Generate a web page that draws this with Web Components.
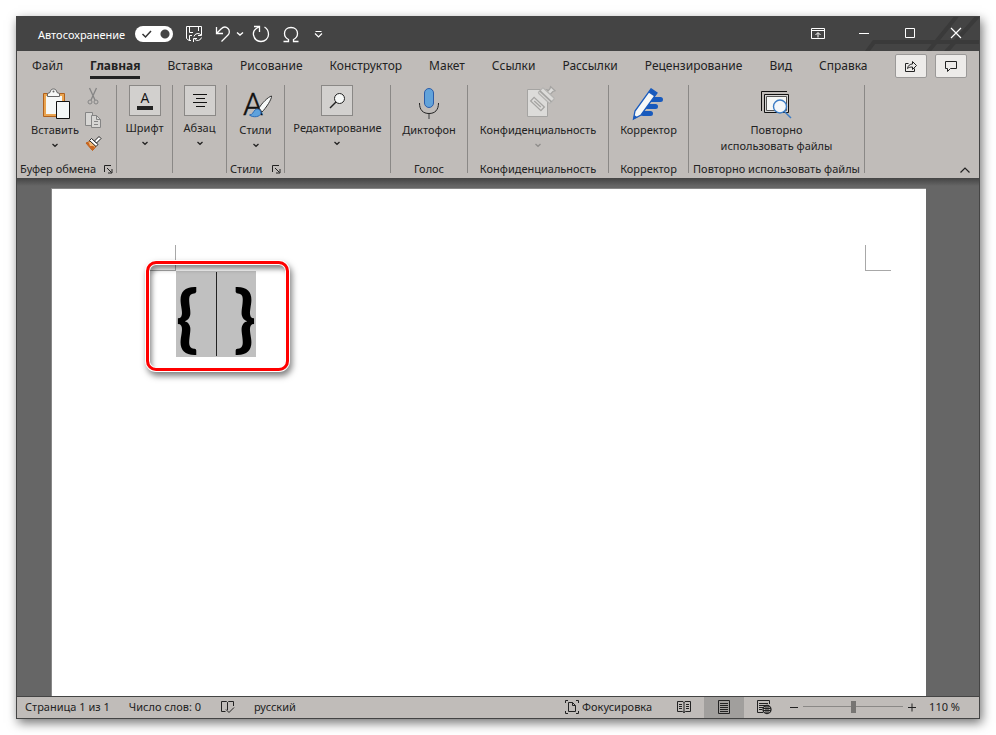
<!DOCTYPE html>
<html lang="ru">
<head>
<meta charset="utf-8">
<title>Документ</title>
<style>
  html, body { height: 100%; margin: 0; }
  body { background: #fff; font-family: "Noto Sans", "Open Sans", sans-serif; font-size: 11px; color: #222; }
</style>
</head>
<body>
<word-window></word-window>

<script>
const ICONS = {
  save: [18, 18, '<g fill="none" stroke="#fff"><path d="M6 15.500H4L1.500 13.500V1.500H16.500V7"/><path d="M4.500 1.500V7.500H8M13.500 1.500V6M4.500 15V10.500H7"/><path d="M9 11.500a4 4 0 0 1 7-1.500M16.500 7v3.500H13M16.500 12.500a4 4 0 0 1-7 1.500M8.500 17v-3.500H12"/></g>'],
  undo: [18, 18, '<path d="M1.500 2V8.500H8M2 8L6 4C8.500 1.500 11 1.500 13 3.500C15 5.500 14.500 8.500 13 10L6.500 16.500" fill="none" stroke="#fff" stroke-width="1.300"/>'],
  redo: [18, 18, '<path d="M2 1.500H7.500V7M7 2C2.500 4 1 7.500 1.500 10C2.500 14.500 6 16.500 9 16.500C13 16.500 16.500 13.500 16.500 9.500C16.500 6 15 3.500 12.500 2" fill="none" stroke="#fff" stroke-width="1.300"/>'],
  omega: [18, 18, '<path d="M1.500 16.500H6.500V14.500C3.500 13 2.500 10.500 2.500 8.500C2.500 5 5 2.500 9 2.500S15.500 5 15.500 8.500C15.500 10.500 14.500 13 11.500 14.500V16.500H16.500" fill="none" stroke="#fff" stroke-width="1.300"/>'],
  caretWhite: [8, 8, '<path d="M1 2.500L4 5L7 2.500" fill="none" stroke="#fff" stroke-width="1.400"/>'],
  more: [10, 10, '<path d="M1.500 2.500H7.500M1 4.500L4.500 8L8 4.500" fill="none" stroke="#fff" stroke-width="1.200"/>'],
  ribbonMode: [14, 12, '<path d="M.5 .5H13.500V10.500H.5ZM.5 2.500H13.500M7 9.500V5M4.500 7L7 4.500L9.500 7" fill="none" stroke="#fff"/>'],
  minimize: [12, 12, '<path d="M1 5.500H11" stroke="#fff"/>'],
  maximize: [12, 12, '<path d="M1.500 .5H10.500V9.500H1.500Z" fill="none" stroke="#fff"/>'],
  close: [12, 12, '<path d="M1 0L11 10M11 0L1 10" stroke="#fff" stroke-width="1.200"/>'],
  share: [14, 14, '<path d="M4.500 4.500H1.500V12.500H10.500V9.500M3.500 9.500C4 6.500 6 5 8.500 5V2.500L12.500 6.500L8.500 10.500V8C6 8 4.500 8.500 3.500 9.500Z" fill="none" stroke="#222"/>'],
  comment: [14, 14, '<path d="M1.500 2.500H12.500V9.500H6.500L3.500 12.500V9.500H1.500Z" fill="none" stroke="#222"/>'],
  caret: [8, 8, '<path d="M1.500 3L4 5.300L6.500 3" fill="none" stroke="currentColor" stroke-width="1.300"/>'],
  collapse: [12, 8, '<path d="M1.500 6.500L6 2L10.500 6.500" fill="none" stroke="#222" stroke-width="1.200"/>'],
  launcher: [9, 9, '<path d="M.5 7V.5H7M3 3L7.500 7.500M8 4V8H4" fill="none" stroke="#222"/>'],
  paste: [28, 32, '<path d="M2.500 5.500H23.500V28.500H2.500Z" fill="#e9a450" stroke="#b0601b"/><path d="M5 8H21V26H5Z" fill="#f6f8f7"/><path d="M6.500 8.500V5.500L9 4.500C9.500 2 10.500 1 12.500 1S15.500 2 16 4.500L18.500 5.500V8.500Z" fill="#f6f8f7" stroke="#666"/><circle cx="12.500" cy="3.500" r="1" fill="#666"/><path d="M15.500 13.500H28.500V30.500H15.500Z" fill="#f4f7f7" stroke="#111"/>'],
  cut: [16, 17, '<g fill="none" stroke="#858585"><path d="M4.500 0L10 12M11.500 0L6 12" stroke-width="1.300"/><circle cx="5" cy="14" r="2"/><circle cx="11" cy="14" r="2"/></g>'],
  copy: [17, 17, '<g fill="#d7d6d4" stroke="#858585"><path d="M.5 .5H7.500V13.500H.5Z"/><path d="M6.500 3.500H11.500L15.500 7.500V15.500H6.500Z"/><path d="M11.500 3.500V7.500H15.500M9 9.500H13M9 12.500H13" fill="none"/></g>'],
  painter: [17, 15, '<path d="M1 7L6 5L11 10.500L7.500 14.500Z" fill="#f3b775" stroke="#bb5a13"/><path d="M1 7L4 7L5 10L8 10L10 11L7.500 14.500Z" fill="#c96620"/><path d="M4.500 4.500L6.500 2.500L13 8.500L11 10.500Z" fill="#fff" stroke="#222"/><path d="M9.500 5L14 .500L16 2.500L11.500 7Z" fill="#fff" stroke="#222"/>'],
  font: [20, 20, '<text x="10" y="12" font-family="Open Sans, sans-serif" font-size="14" text-anchor="middle" fill="#111">A</text><path d="M2 15H18V19H2Z" fill="#222"/>'],
  paragraph: [20, 20, '<path d="M3 3.500H17M6 7.500H15M3 11.500H17M6 15.500H15" stroke="#111"/>'],
  search: [20, 20, '<circle cx="12.500" cy="7.500" r="5" fill="#f6f8f7" stroke="#222"/><path d="M9 11L3 17" stroke="#222" stroke-width="1.400"/>'],
  styles: [34, 32, '<text x="14" y="27" font-family="Roboto, sans-serif" font-size="32" font-weight="300" text-anchor="middle" fill="#111" stroke="#111" stroke-width=".4">A</text><path d="M20 20C23 15 29 9 32.500 8C33 11 27 20 23 24Z" fill="#f6f8f7" stroke="#333"/><path d="M10.500 27C14 26.500 14 24 16 22C18 20 22 21.500 22 25C21.500 29 14 30 10.500 27Z" fill="#5ea2dd" stroke="#2d6cb5"/>'],
  mic: [24, 32, '<rect x="7.500" y=".500" width="9" height="19" rx="4.500" fill="#62a3da" stroke="#2c5da8"/><path d="M2.500 15C2.500 22 6 25.500 12 25.500S21.500 22 21.500 15" fill="none" stroke="#222"/><path d="M12 26V31" stroke="#666" stroke-width="1.500"/>'],
  privacy: [28, 32, '<path d="M3.500 1.500H23.500V28.500H3.500Z" fill="#dcdbd9" stroke="#a5a4a2"/><g stroke="#a5a4a2" stroke-width="1.300" fill="#dcdbd9"><g transform="rotate(43 13.500 16)"><path d="M6.500 13.500H20.500V18.500H6.500Z"/><path d="M9 16H18"/></g><g transform="rotate(43 22 8)"><path d="M20 5V0L19 -2H25L24 0V5Z"/><rect x="14" y="4" width="16" height="7" rx="1" stroke="#b5b4b2"/><path d="M14 8.500H30" stroke-width="1.800"/></g></g>'],
  editor: [32, 32, '<g stroke="#185abd" stroke-width="5" stroke-linecap="round"><path d="M18 11.500H28.500M15 18.500H23.500M11 25.500H18.500"/></g><path d="M19 .800L25 5L9 27L1.500 31L3 23Z" fill="#f6f8f7" stroke="#185abd" stroke-width="1.300"/><path d="M19 .800L25 5L22.500 8.500L16.500 4.500ZM2.300 27L1 31.500L5.500 29.300Z" fill="#185abd"/>'],
  reuse: [32, 30, '<path d="M1.500 22V2.500H27" fill="none" stroke="#111"/><path d="M4.500 5.500H28.500V23.500H4.500Z" fill="#d4d3d2" stroke="#111"/><path d="M6.500 7.500H26.500V21.500H6.500Z" fill="#f6f8f7" stroke="#555"/><path d="M24 22L31 29" stroke="#3c7cc4" stroke-width="1.500"/><circle cx="20" cy="17.500" r="6.500" fill="#f3f7fa" stroke="#3c7cc4" stroke-width="1.400"/>'],
  proof: [15, 14, '<path d="M7.500 2.500V10M7.500 2.500L6.500 1.500H1.500V11.500H5.500M7.500 2.500L8.500 1.500H13.500V6M6 9.500L9 12.500L14 7.500" fill="none" stroke="#222"/>'],
  focus: [14, 14, '<path d="M3 .5H.5V3M11 .5H13.500V3M.5 11V13.500H3M13.500 11V13.500H11M3.500 2.500H7.500L10.500 5.500V11.500H3.500ZM7.500 2.500V5.500H10.500" fill="none" stroke="#222"/>'],
  read: [14, 14, '<path d="M7 2V13M7 2.500L6 1.500H.5V11.500H5.500L7 12.500L8.500 11.500H13.500V1.500H8L7 2.500M2 4.500H5M2 6.500H5M2 8.500H5M9 4.500H12M9 6.500H12M9 8.500H12" fill="none" stroke="#222"/>'],
  print: [12, 14, '<path d="M.5 .5H11.500V13.500H.5ZM2 3.500H10M2 5.500H10M2 7.500H10M2 9.500H10M2 11.500H10" fill="none" stroke="#222"/>'],
  web: [15, 14, '<path d="M6 12.500H.5V.5H12.500V4M2 3.500H11M2 5.500H8M2 7.500H6M2 9.500H5" fill="none" stroke="#222"/><circle cx="10" cy="9.500" r="4" fill="#c0bcb9" stroke="#222" stroke-width="1.300"/><path d="M6 8.500H14M6 10.500H14M9 6V13M11 6V13" stroke="#222"/>'],
  minus: [10, 10, '<path d="M1 5.500H9" stroke="#222"/>'],
  plus: [10, 10, '<path d="M1 5.500H9M5 1.500V9.500" stroke="#222"/>']
};

const RESET = `
  * { box-sizing: border-box; }
  button { font: inherit; color: inherit; background: none; border: 0; margin: 0; padding: 0; display: flex; align-items: center; justify-content: center; }
`;

function define(name, markup, setup) {
  customElements.define(name, class extends HTMLElement {
    connectedCallback() {
      if (this.shadowRoot) return;
      const root = this.attachShadow({ mode: 'open' });
      root.innerHTML = markup;
      if (setup) setup(this, root);
    }
  });
}

define('ui-icon', `<style>:host{display:block;flex:none} svg{display:block;overflow:visible}</style><span></span>`, (el, root) => {
  const [w, h, body] = ICONS[el.getAttribute('name')];
  root.querySelector('span').innerHTML = `<svg width="${w}" height="${h}" viewBox="0 0 ${w} ${h}" aria-hidden="true">${body}</svg>`;
});

define('title-bar', `<style>${RESET}
  :host { display: flex; align-items: center; height: 34px; flex: none; color: #fff; background: #444; position: relative; overflow: hidden; }
  .decor { position: absolute; right: 0; top: 0; }
  label { display: flex; align-items: center; gap: 10px; margin-left: 21px; }
  input { appearance: none; margin: 0; width: 38px; height: 16px; border-radius: 8px; background: radial-gradient(circle at 30px 8px, #444 4px, #fff 5px); }
  .toggle { display: grid; }
  .toggle > * { grid-area: 1 / 1; }
  .toggle svg { align-self: center; margin-left: 6px; pointer-events: none; z-index: 1; }
  .quick { display: flex; align-items: center; margin-left: 12px; flex: 1; }
  .quick button + button { margin-left: 12px; }
  .quick button.drop { margin-left: 3px; }
  .quick button.redo { margin-left: 8px; }
  .quick button.more { margin-left: 14px; }
  .caption { display: flex; align-self: stretch; position: relative; }
  .caption button { width: 46px; }
</style>
<svg class="decor" width="120" height="34" viewBox="0 0 120 34" fill="none" stroke="#3a3a3a" stroke-width="4" aria-hidden="true"><path d="M7 36L15 25H120M68 36L98 -1M86 36L119 -1"/></svg>
<label>Автосохранение<span class="toggle"><input type="checkbox" role="switch" checked><svg width="12" height="10" viewBox="0 0 12 10"><path d="M1.500 5L4.500 8L10 2" fill="none" stroke="#333" stroke-width="1.500"/></svg></span></label>
<div class="quick">
  <button aria-label="Сохранить"><ui-icon name="save"></ui-icon></button>
  <button aria-label="Отменить"><ui-icon name="undo"></ui-icon></button>
  <button class="drop" aria-label="Список отмены"><ui-icon name="caretWhite"></ui-icon></button>
  <button class="redo" aria-label="Повторить"><ui-icon name="redo"></ui-icon></button>
  <button aria-label="Символ"><ui-icon name="omega"></ui-icon></button>
  <button class="more" aria-label="Настройка панели"><ui-icon name="more"></ui-icon></button>
</div>
<div class="caption">
  <button aria-label="Параметры ленты"><ui-icon name="ribbonMode"></ui-icon></button>
  <button aria-label="Свернуть"><ui-icon name="minimize"></ui-icon></button>
  <button aria-label="Развернуть"><ui-icon name="maximize"></ui-icon></button>
  <button aria-label="Закрыть"><ui-icon name="close"></ui-icon></button>
</div>`);

define('ribbon-tab', `<style>${RESET}
  :host { display: block; }
  button { height: 28px; line-height: 20px; padding: 4px 0 0; border-bottom: 3px solid transparent; font-size: 12px; white-space: nowrap; }
  :host([selected]) button { font-weight: 700; border-color: #222; }
</style><button role="tab"><slot></slot></button>`, (el, root) =>
  root.querySelector('button').setAttribute('aria-selected', el.hasAttribute('selected')));

define('tab-strip', `<style>${RESET}
  :host { display: flex; align-items: flex-start; height: 31px; flex: none; padding: 0 12px 0 15px; }
  .tabs { display: flex; gap: 27px; flex: 1; min-width: 0; }
  .actions { display: flex; gap: 8px; padding-top: 3px; }
  .actions button { width: 32px; height: 24px; background: #edebe9; border: 1px solid #9b9998; border-radius: 2px; }
</style>
<div class="tabs" role="tablist"><slot></slot></div>
<div class="actions"><button aria-label="Поделиться"><ui-icon name="share"></ui-icon></button><button aria-label="Примечания"><ui-icon name="comment"></ui-icon></button></div>`);

define('ribbon-button', `<style>${RESET}
  :host { display: block; padding-top: 2px; }
  :host([boxed]) { padding-top: 0; }
  button { flex-direction: column; justify-content: flex-start; line-height: 16px; text-align: center; white-space: nowrap; }
  .icon { height: 34px; display: flex; align-items: center; justify-content: center; margin-bottom: 1px; }
  :host([boxed]) .icon { width: 32px; height: 31px; margin-bottom: 4px; background: #d2d0ce; border: 1px solid #8a8886; }
  .caret { display: none; height: 14px; align-items: center; }
  :host([menu]) .caret { display: flex; }
  :host([disabled]) .caret { color: #8f8d8b; }
</style>
<button><span class="icon"></span><span><slot></slot></span><span class="caret"><ui-icon name="caret"></ui-icon></span></button>`, (el, root) => {
  root.querySelector('.icon').innerHTML = `<ui-icon name="${el.getAttribute('icon')}"></ui-icon>`;
});

define('ribbon-group', `<style>${RESET}
  :host { display: flex; flex: none; min-width: var(--group-width, 0); }
  .column { flex: 1; display: flex; flex-direction: column; }
  .body { flex: 1; display: flex; justify-content: center; gap: 6px; }
  .separator { width: 1px; margin-bottom: 5px; background: #8a8886; }
  footer { display: flex; justify-content: center; align-items: center; height: 17px; padding-bottom: 1px; line-height: 16px; white-space: nowrap; }
  footer button { display: none; margin-left: auto; }
  :host([launcher]) footer { padding: 0 3px 1px; }
  :host([launcher]) footer button { display: flex; }
</style>
<div class="column"><div class="body"><slot></slot></div><footer><span></span><button aria-label="Параметры группы"><ui-icon name="launcher"></ui-icon></button></footer></div><div class="separator"></div>`, (el, root) => {
  root.querySelector('footer span').textContent = el.getAttribute('label') || '';
});

define('clipboard-tools', `<style>${RESET} :host { display: grid; gap: 7px; align-content: start; padding-top: 3px; }</style>
<button aria-label="Вырезать"><ui-icon name="cut"></ui-icon></button>
<button aria-label="Копировать"><ui-icon name="copy"></ui-icon></button>
<button aria-label="Формат по образцу"><ui-icon name="painter"></ui-icon></button>`);

define('ribbon-bar', `<style>${RESET}
  :host { display: block; flex: none; background: #c0bcb9; }
  .groups { display: flex; height: 96px; padding-top: 3px; }
  .end { margin-left: auto; align-self: flex-end; padding: 0 8px 4px; }
</style>
<tab-strip>
  <ribbon-tab>Файл</ribbon-tab><ribbon-tab selected>Главная</ribbon-tab><ribbon-tab>Вставка</ribbon-tab><ribbon-tab>Рисование</ribbon-tab><ribbon-tab>Конструктор</ribbon-tab><ribbon-tab>Макет</ribbon-tab><ribbon-tab>Ссылки</ribbon-tab><ribbon-tab>Рассылки</ribbon-tab><ribbon-tab>Рецензирование</ribbon-tab><ribbon-tab>Вид</ribbon-tab><ribbon-tab>Справка</ribbon-tab>
</tab-strip>
<div class="groups">
  <ribbon-group label="Буфер обмена" launcher style="--group-width:100px"><ribbon-button icon="paste" menu>Вставить</ribbon-button><clipboard-tools></clipboard-tools></ribbon-group>
  <ribbon-group style="--group-width:56px"><ribbon-button icon="font" boxed menu>Шрифт</ribbon-button></ribbon-group>
  <ribbon-group style="--group-width:54px"><ribbon-button icon="paragraph" boxed menu>Абзац</ribbon-button></ribbon-group>
  <ribbon-group label="Стили" launcher style="--group-width:58px"><ribbon-button icon="styles" menu>Стили</ribbon-button></ribbon-group>
  <ribbon-group style="--group-width:106px"><ribbon-button icon="search" boxed menu>Редактирование</ribbon-button></ribbon-group>
  <ribbon-group label="Голос" style="--group-width:77px"><ribbon-button icon="mic">Диктофон</ribbon-button></ribbon-group>
  <ribbon-group label="Конфиденциальность" style="--group-width:141px"><ribbon-button icon="privacy" menu disabled>Конфиденциальность</ribbon-button></ribbon-group>
  <ribbon-group label="Корректор" style="--group-width:80px"><ribbon-button icon="editor">Корректор</ribbon-button></ribbon-group>
  <ribbon-group label="Повторно использовать файлы" style="--group-width:176px"><ribbon-button icon="reuse">Повторно<br>использовать файлы</ribbon-button></ribbon-group>
  <button class="end" aria-label="Свернуть ленту"><ui-icon name="collapse"></ui-icon></button>
</div>`);

define('document-page', `<style>${RESET}
  :host { display: block; flex: 1; min-height: 0; overflow: hidden; padding: 10px 53px 0 34px; background: linear-gradient(#444 0, #666 8px); }
  .page { height: 100%; background: #fff; border: 1px solid #888; border-bottom: 0; border-right: 0; padding: 56px 35px 0 98px; }
  .marks { display: flex; justify-content: space-between; }
  .marks i { width: 26px; height: 26px; border: 0 solid #a8a8a8; border-bottom-width: 1px; }
  .marks i:first-child { border-right-width: 1px; }
  .marks i:last-child { border-left-width: 1px; }
  .line { display: inline-flex; justify-content: space-between; position: relative; width: 80px; margin-left: 26px; height: 86px; background: #c0c0c0; color: #000; font: 900 72px/90px "Lato", sans-serif; white-space: pre; }
  .cursor { position: absolute; left: 40px; top: 1px; bottom: 1px; width: 1px; background: #222; }
  .callout { position: absolute; left: -30px; top: -10px; width: 143px; height: 110px; border: 3px solid #f00; border-radius: 10px;
    box-shadow: 0 0 0 1px #fff, 2px 4px 6px 1px rgba(0,0,0,.5), inset 0 0 0 1px #fff, inset 3px 5px 5px rgba(0,0,0,.45); }
</style>
<div class="page"><div class="marks"><i></i><i></i></div>
<div class="line"><span>{</span><span>}</span><span class="cursor"></span><span class="callout"></span></div></div>`);

define('status-bar', `<style>${RESET}
  :host { display: flex; align-items: stretch; height: 22px; flex: none; background: #c0bcb9; border-top: 1px solid #444; line-height: 16px; padding: 0 19px 0 8px; white-space: nowrap; box-sizing: border-box; }
  div { display: flex; align-items: center; padding-bottom: 2px; }
  .info { gap: 19px; flex: 1; }
  .focus { gap: 3px; margin-right: 12px; }
  .view { width: 40px; padding-bottom: 2px; }
  .view[aria-pressed=true] { background: #a19f9d; }
  .zoom { margin-left: 5px; gap: 4px; }
  input { appearance: none; width: 100px; height: 12px; margin: 0; background: linear-gradient(#8a8886, #8a8886) center / 100% 1px no-repeat; }
  input::-webkit-slider-thumb { appearance: none; width: 5px; height: 12px; background: #777573; }
  output { margin-left: 8px; }
</style>
<div class="info"><span>Страница 1 из 1</span><span>Число слов: 0</span><button aria-label="Правописание"><ui-icon name="proof"></ui-icon></button><button>русский</button></div>
<div><button class="focus"><ui-icon name="focus"></ui-icon>Фокусировка</button></div>
<button class="view" aria-label="Режим чтения"><ui-icon name="read"></ui-icon></button>
<button class="view" aria-label="Разметка страницы" aria-pressed="true"><ui-icon name="print"></ui-icon></button>
<button class="view" aria-label="Веб-документ"><ui-icon name="web"></ui-icon></button>
<div class="zoom"><button aria-label="Уменьшить"><ui-icon name="minus"></ui-icon></button><input type="range" min="10" max="210" value="110" aria-label="Масштаб"><button aria-label="Увеличить"><ui-icon name="plus"></ui-icon></button><output>110 %</output></div>`);

define('word-window', `<style>
  :host { display: block; box-sizing: border-box; height: 100vh; padding: 16px; }
  main { box-sizing: border-box; height: 100%; display: flex; flex-direction: column; border: 1px solid #444; box-shadow: 2px 4px 10px rgba(0,0,0,.55); }
</style><main><title-bar></title-bar><ribbon-bar></ribbon-bar><document-page></document-page><status-bar></status-bar></main>`);
</script>
</body>
</html>
